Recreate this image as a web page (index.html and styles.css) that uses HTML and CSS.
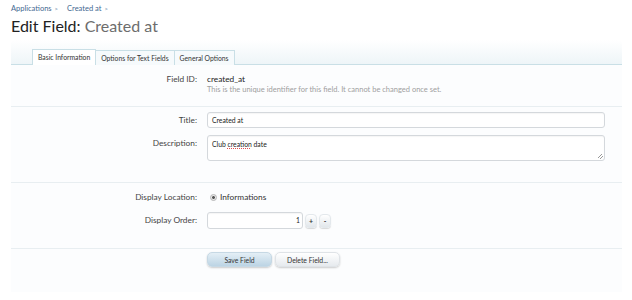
FILE: index.html
```html
<!DOCTYPE html>
<html>
<head>
<meta charset="utf-8">
<link rel="stylesheet" href="styles.css">
</head>
<body>
<div class="page">
  <nav class="breadcrumb">
    <a class="crumb">Applications</a><span class="arrow">&gt;</span>
    <a class="crumb">Created at</a><span class="arrow">&gt;</span>
  </nav>
  <h1 class="title">Edit Field: <span class="muted">Created at</span></h1>

  <div class="tabbar">
    <div class="tab active">Basic Information</div>
    <div class="tab">Options for Text Fields</div>
    <div class="tab">General Options</div>
  </div>

  <form class="form">
    <div class="section sec-id">
      <div class="row">
        <div class="label">Field ID:</div>
        <div class="control">
          <div class="value">created_at</div>
          <div class="hint">This is the unique identifier for this field. It cannot be changed once set.</div>
        </div>
      </div>
    </div>

    <div class="section sec-text">
      <div class="row row-input">
        <div class="label">Title:</div>
        <div class="control"><div class="textbox">Created at</div></div>
      </div>
      <div class="row row-input">
        <div class="label">Description:</div>
        <div class="control"><div class="textbox textarea"><span>Club <span class="spell">creation</span> date</span><span class="grip"></span></div></div>
      </div>
    </div>

    <div class="section sec-display">
      <div class="row row-radio">
        <div class="label">Display Location:</div>
        <div class="control radio-line"><span class="radio"></span><span class="radio-text">Informations</span></div>
      </div>
      <div class="row row-input">
        <div class="label">Display Order:</div>
        <div class="control spin">
          <div class="textbox number">1</div>
          <span class="spinbtn">+</span>
          <span class="spinbtn">-</span>
        </div>
      </div>
    </div>

    <div class="actions">
      <span class="button primary">Save Field</span>
      <span class="button">Delete Field...</span>
    </div>
  </form>
</div>
</body>
</html>
```

FILE: styles.css
```css
html, body {
  margin: 0;
  padding: 0;
  background: #ffffff;
}
body {
  font-family: "Lato", "Liberation Sans", sans-serif;
  color: #222;
}
.page {
  padding: 0 10px 0 11px;
}
.breadcrumb {
  height: 14px;
  padding-top: 2px;
  font-size: 7.5px;
  line-height: 10px;
  color: #3f6891;
  display: flex;
  align-items: center;
}
.crumb {
  color: #3f6891;
}
.arrow {
  font-size: 6px;
  color: #6a8aa8;
  margin: 0 9px 0 3px;
}
.title {
  margin: 0;
  height: 20px;
  font-size: 16px;
  line-height: 20px;
  font-weight: normal;
  color: #222;
}
.muted {
  color: #6d6d6d;
}
.tabbar {
  margin-top: 4px;
  height: 25px;
  box-sizing: border-box;
  background: linear-gradient(to bottom, #ffffff 0%, #eef5f8 100%);
  border-bottom: 1px solid #c9dfe6;
  display: flex;
  align-items: flex-end;
  padding-left: 21px;
  border-radius: 4px 4px 0 0;
}
.tab {
  height: 15px;
  box-sizing: border-box;
  margin-bottom: -1px;
  padding: 0 5px;
  font-size: 6.8px;
  line-height: 14px;
  color: #333;
  background: #f6fafc;
  border: 1px solid #c9dfe6;
  border-bottom: none;
  border-left: none;
}
.tab:first-child {
  border-left: 1px solid #c9dfe6;
}
.tab.active {
  background: #ffffff;
  height: 16px;
  padding-bottom: 1px;
  border-bottom: none;
}
.form {
  margin: 0;
  background: #fcfdfe;
}
.section {
  border-bottom: 1px solid #e8eef1;
}
.sec-id {
  padding: 8px 0 11px;
}
.sec-text {
  padding: 5px 0 21px;
}
.sec-display {
  padding: 7px 0 19px;
}
.row {
  display: flex;
  align-items: flex-start;
}
.label {
  width: 186px;
  flex: none;
  text-align: right;
  font-size: 8.3px;
  color: #444;
  line-height: 12px;
  padding-right: 10px;
}
.control {
  flex: 1;
  padding-right: 17px;
}
.value {
  font-size: 8.3px;
  line-height: 12px;
  color: #222;
}
.hint {
  font-size: 7.5px;
  line-height: 10px;
  color: #a0a0a0;
}
.row-input {
  margin-bottom: 7px;
}
.row-input:last-child {
  margin-bottom: 0;
}
.row-input .label {
  padding-top: 2px;
}
.textbox {
  height: 16px;
  box-sizing: border-box;
  border: 1px solid #d4d8dc;
  border-radius: 3px;
  background: #fff;
  font-size: 6.8px;
  line-height: 14px;
  padding: 0 4px;
  color: #222;
  box-shadow: inset 0 1px 1px rgba(0,0,0,0.04);
}
.textarea {
  height: 26px;
  padding-top: 1px;
  position: relative;
}
.spell {
  text-decoration: underline dotted #e05050;
  text-decoration-thickness: 1px;
  text-underline-offset: 1px;
}
.grip {
  position: absolute;
  right: 1px;
  bottom: 1px;
  width: 5px;
  height: 5px;
  background: linear-gradient(135deg, transparent 40%, #999 40%, #999 50%, transparent 50%, transparent 70%, #999 70%, #999 80%, transparent 80%);
}
.row-radio {
  align-items: center;
  margin-bottom: 9px;
  margin-top: 1px;
}
.radio-line {
  display: flex;
  align-items: center;
  padding-left: 3px;
}
.radio {
  width: 5px;
  height: 5px;
  border-radius: 50%;
  border: 1px solid #b5b5b5;
  background: radial-gradient(circle, #555 0, #555 1.2px, #e9e9e9 1.6px);
  margin-right: 3px;
}
.radio-text {
  font-size: 8.3px;
  color: #333;
}
.spin {
  display: flex;
  align-items: center;
  gap: 2px;
}
.number {
  width: 96px;
  height: 17px;
  text-align: right;
  padding-right: 2px;
  line-height: 15px;
}
.spinbtn {
  width: 12px;
  height: 14px;
  box-sizing: border-box;
  border-radius: 4px;
  background: linear-gradient(to bottom, #ffffff, #e2e7eb);
  border: 1px solid #e3e8ec;
  box-shadow: 0 1px 1px rgba(0,0,0,0.15);
  font-size: 7px;
  line-height: 12px;
  text-align: center;
  color: #333;
  font-weight: bold;
}
.actions {
  display: flex;
  gap: 3px;
  padding: 3px 0 0 196px;
  height: 40px;
}
.button {
  width: 65px;
  height: 15px;
  box-sizing: border-box;
  border-radius: 5px;
  font-size: 6.8px;
  line-height: 14px;
  text-align: center;
  color: #333;
  background: linear-gradient(to bottom, #ffffff, #e6eaee);
  border: 1px solid #dfe3e7;
  box-shadow: 0 1px 2px rgba(0,0,0,0.2);
}
.button.primary {
  background: linear-gradient(to bottom, #e4eff6, #bcd4e4);
  border-color: #c6d8e4;
}
```
